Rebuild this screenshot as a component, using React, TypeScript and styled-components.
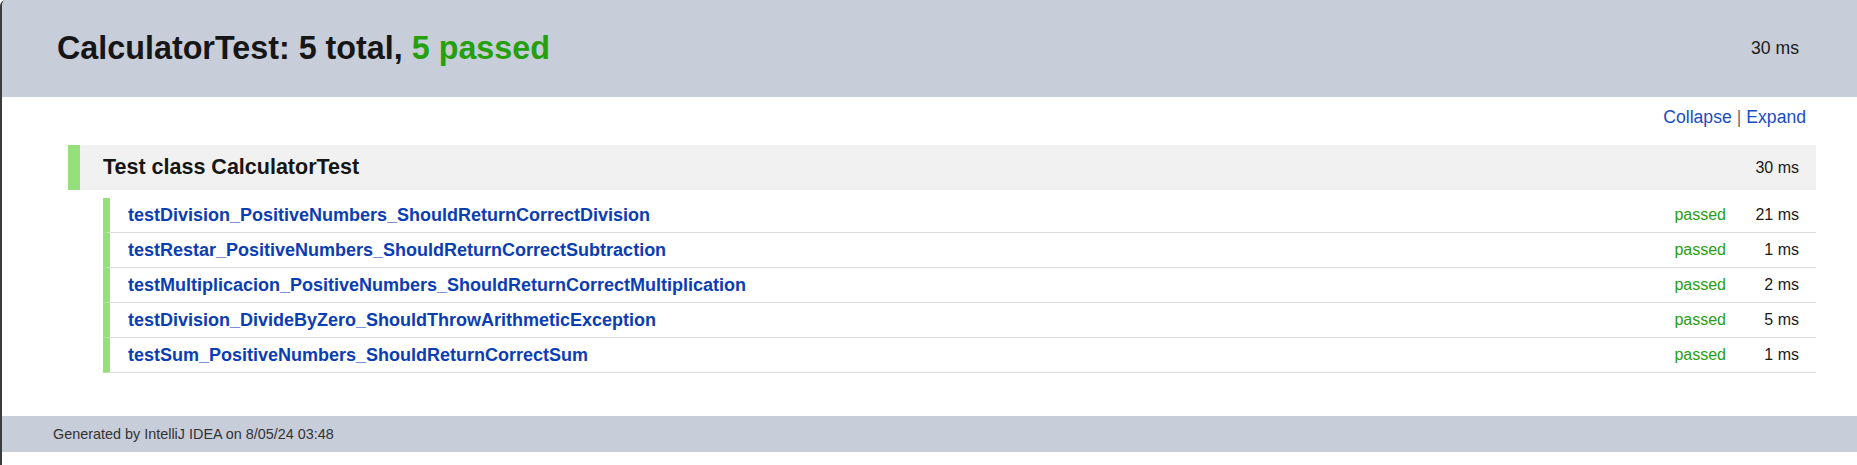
import styled, { createGlobalStyle } from "styled-components";

const GlobalStyle = createGlobalStyle`
  html, body {
    margin: 0;
    padding: 0;
    background: #ffffff;
  }
  body {
    font-family: "Liberation Sans", Arial, sans-serif;
    color: #1a1a1a;
  }
`;

const Page = styled.div`
  min-height: 465px;
  border-left: 2px solid #3b3b3b;
  border-top-left-radius: 6px;
  overflow: hidden;
  box-sizing: border-box;
`;

const Header = styled.header`
  height: 97px;
  background: #c7cdd9;
  display: flex;
  align-items: center;
  justify-content: space-between;
  padding: 0 58px 0 55px;
  box-sizing: border-box;
`;

const Title = styled.h1`
  margin: 0;
  font-size: 32.3px;
  font-weight: bold;
  color: #161616;
  line-height: 1;
`;

const Passed = styled.span`
  color: #25a00c;
`;

const Duration = styled.span<{ $size?: number }>`
  font-size: ${(p) => p.$size ?? 16}px;
  color: #1a1a1a;
`;

const Controls = styled.div`
  display: flex;
  justify-content: flex-end;
  align-items: center;
  height: 40px;
  padding: 0 51px 0 0;
  font-size: 17.6px;
  color: #1a4cc2;
  gap: 5px;
`;

const Link = styled.a`
  color: #1a4cc2;
  text-decoration: none;
  cursor: pointer;
`;

const Divider = styled.span`
  color: #6b6b6b;
`;

const Content = styled.div`
  margin: 8px 41px 0 66px;
`;

const ClassRow = styled.div`
  height: 45px;
  background: #f1f1f1;
  border-left: 12px solid #95e07b;
  display: flex;
  align-items: center;
  justify-content: space-between;
  padding: 0 17px 0 23px;
`;

const ClassName = styled.h2`
  margin: 0;
  font-size: 21.5px;
  font-weight: bold;
  color: #161616;
`;

const TestList = styled.div`
  margin: 8px 0 0 35px;
`;

const TestRow = styled.div`
  height: 34px;
  border-left: 7px solid #95e07b;
  border-bottom: 1px solid #dcdcdc;
  display: flex;
  align-items: center;
  padding: 0 17px 0 18px;
`;

const TestName = styled.a`
  flex: 1;
  font-size: 18px;
  font-weight: bold;
  color: #0b3db3;
  text-decoration: none;
`;

const Status = styled.span`
  font-size: 16px;
  color: #26a00e;
`;

const TestTime = styled.span`
  width: 73px;
  text-align: right;
  font-size: 16px;
  color: #1a1a1a;
`;

const Footer = styled.footer`
  margin-top: 43px;
  height: 36px;
  background: #c7cdd9;
  display: flex;
  align-items: center;
  padding-left: 51px;
  font-size: 14.4px;
  color: #333333;
`;

const tests = [
  { name: "testDivision_PositiveNumbers_ShouldReturnCorrectDivision", ms: 21 },
  { name: "testRestar_PositiveNumbers_ShouldReturnCorrectSubtraction", ms: 1 },
  { name: "testMultiplicacion_PositiveNumbers_ShouldReturnCorrectMultiplication", ms: 2 },
  { name: "testDivision_DivideByZero_ShouldThrowArithmeticException", ms: 5 },
  { name: "testSum_PositiveNumbers_ShouldReturnCorrectSum", ms: 1 },
];

export default function App() {
  return (
    <>
      <GlobalStyle />
      <Page>
        <Header>
          <Title>
            CalculatorTest: 5 total, <Passed>5 passed</Passed>
          </Title>
          <Duration $size={17.6}>30 ms</Duration>
        </Header>

        <Controls>
          <Link>Collapse</Link>
          <Divider>|</Divider>
          <Link>Expand</Link>
        </Controls>

        <Content>
          <ClassRow>
            <ClassName>Test class CalculatorTest</ClassName>
            <Duration>30 ms</Duration>
          </ClassRow>

          <TestList>
            {tests.map((t) => (
              <TestRow key={t.name}>
                <TestName>{t.name}</TestName>
                <Status>passed</Status>
                <TestTime>{t.ms} ms</TestTime>
              </TestRow>
            ))}
          </TestList>
        </Content>

        <Footer>Generated by IntelliJ IDEA on 8/05/24 03:48</Footer>
      </Page>
    </>
  );
}
